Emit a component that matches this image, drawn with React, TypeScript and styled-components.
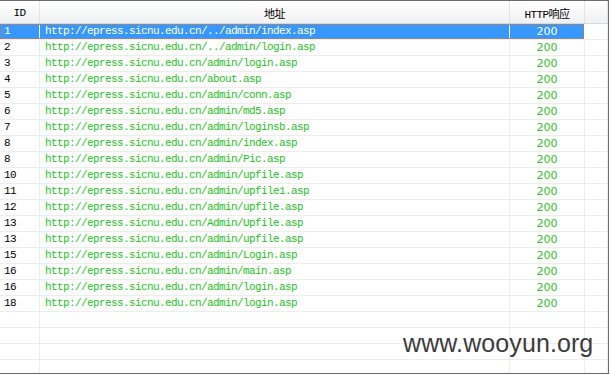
import styled, { createGlobalStyle } from "styled-components";

const GlobalStyle = createGlobalStyle`
  html, body {
    margin: 0;
    padding: 0;
    background: #ffffff;
  }
`;

const MONO = `"Liberation Mono", "DejaVu Sans Mono", "Noto Sans CJK SC", monospace`;
const COLUMNS = "40px 470px 75px 1fr";

const Frame = styled.div`
  position: relative;
  width: 609px;
  height: 374px;
  box-sizing: border-box;
  border-top: 1px solid #6b6b6b;
  border-right: 1px solid #6b6b6b;
  border-bottom: 1px solid #6b6b6b;
  overflow: hidden;
  display: flex;
  flex-direction: column;
  font-family: ${MONO};
`;

const Header = styled.div`
  display: grid;
  grid-template-columns: ${COLUMNS};
  height: 23px;
  flex: none;
  box-sizing: border-box;
  background: linear-gradient(#ffffff, #f0f1f3);
  border-bottom: 1px solid #d8d8d8;
`;

const HeaderCell = styled.div`
  display: flex;
  align-items: center;
  justify-content: center;
  border-right: 1px solid #e4e4e4;
  font-family: ${MONO};
  font-size: 11px;
  letter-spacing: -0.6px;
  color: #000000;
  padding-top: 1px;
`;

const Body = styled.div`
  flex: 1;
  overflow: hidden;
`;

const Row = styled.div<{ selected?: boolean }>`
  position: relative;
  display: grid;
  grid-template-columns: ${COLUMNS};
  height: 16px;

  ${(p) =>
    p.selected &&
    `
    &::after {
      content: "";
      position: absolute;
      left: 1px;
      top: 0;
      width: 583px;
      height: 15px;
      box-sizing: border-box;
      border: 1px dotted #e07a2a;
      pointer-events: none;
    }
  `}
`;

const Cell = styled.div<{ selected?: boolean; align?: "left" | "center" }>`
  box-sizing: border-box;
  border-right: 1px solid ${(p) => (p.selected ? "#ffffff" : "#ededed")};
  border-bottom: 1px solid #ededed;
  background: ${(p) => (p.selected ? "#3797fa" : "transparent")};
  display: flex;
  align-items: center;
  justify-content: ${(p) => (p.align === "center" ? "center" : "flex-start")};
  white-space: nowrap;
  overflow: hidden;
  line-height: 15px;
`;

const IdCell = styled(Cell)`
  padding-left: 4px;
  font-family: ${MONO};
  font-size: 11px;
  letter-spacing: -0.6px;
  color: ${(p) => (p.selected ? "#ffffff" : "#000000")};
`;

const UrlCell = styled(Cell)`
  padding-left: 5px;
  font-family: ${MONO};
  font-size: 11px;
  letter-spacing: -0.6px;
  color: ${(p) => (p.selected ? "#ffffff" : "#1fc41f")};
`;

const CodeCell = styled(Cell)`
  font-family: "DejaVu Sans", "Liberation Sans", sans-serif;
  font-size: 11px;
  color: ${(p) => (p.selected ? "#ffffff" : "#28c428")};
`;

const EmptyCell = styled(Cell)``;

const Watermark = styled.div`
  position: absolute;
  left: 403px;
  top: 328px;
  font-family: "Liberation Sans", Arial, sans-serif;
  font-size: 25px;
  color: #3c3c3c;
  letter-spacing: 0.1px;
  pointer-events: none;
`;

const BASE = "http://epress.sicnu.edu.cn";

const rows: [string, string][] = [
  ["1", "/../admin/index.asp"],
  ["2", "/../admin/login.asp"],
  ["3", "/admin/login.asp"],
  ["4", "/about.asp"],
  ["5", "/admin/conn.asp"],
  ["6", "/admin/md5.asp"],
  ["7", "/admin/loginsb.asp"],
  ["8", "/admin/index.asp"],
  ["8", "/admin/Pic.asp"],
  ["10", "/admin/upfile.asp"],
  ["11", "/admin/upfile1.asp"],
  ["12", "/admin/upfile.asp"],
  ["13", "/Admin/Upfile.asp"],
  ["13", "/admin/upfile.asp"],
  ["15", "/admin/Login.asp"],
  ["16", "/admin/main.asp"],
  ["16", "/admin/login.asp"],
  ["18", "/admin/login.asp"],
];

export default function App() {
  return (
    <>
      <GlobalStyle />
      <Frame>
        <Header>
          <HeaderCell>ID</HeaderCell>
          <HeaderCell>地址</HeaderCell>
          <HeaderCell>HTTP响应</HeaderCell>
          <HeaderCell />
        </Header>
        <Body>
          {rows.map(([id, path], index) => {
            const selected = index === 0;
            return (
              <Row key={index} selected={selected}>
                <IdCell selected={selected}>{id}</IdCell>
                <UrlCell selected={selected}>{BASE + path}</UrlCell>
                <CodeCell selected={selected} align="center">
                  200
                </CodeCell>
                <EmptyCell />
              </Row>
            );
          })}
          {[0, 1, 2, 3, 4].map((i) => (
            <Row key={"empty" + i}>
              <EmptyCell />
              <EmptyCell />
              <EmptyCell />
              <EmptyCell />
            </Row>
          ))}
        </Body>
        <Watermark>www.wooyun.org</Watermark>
      </Frame>
    </>
  );
}
